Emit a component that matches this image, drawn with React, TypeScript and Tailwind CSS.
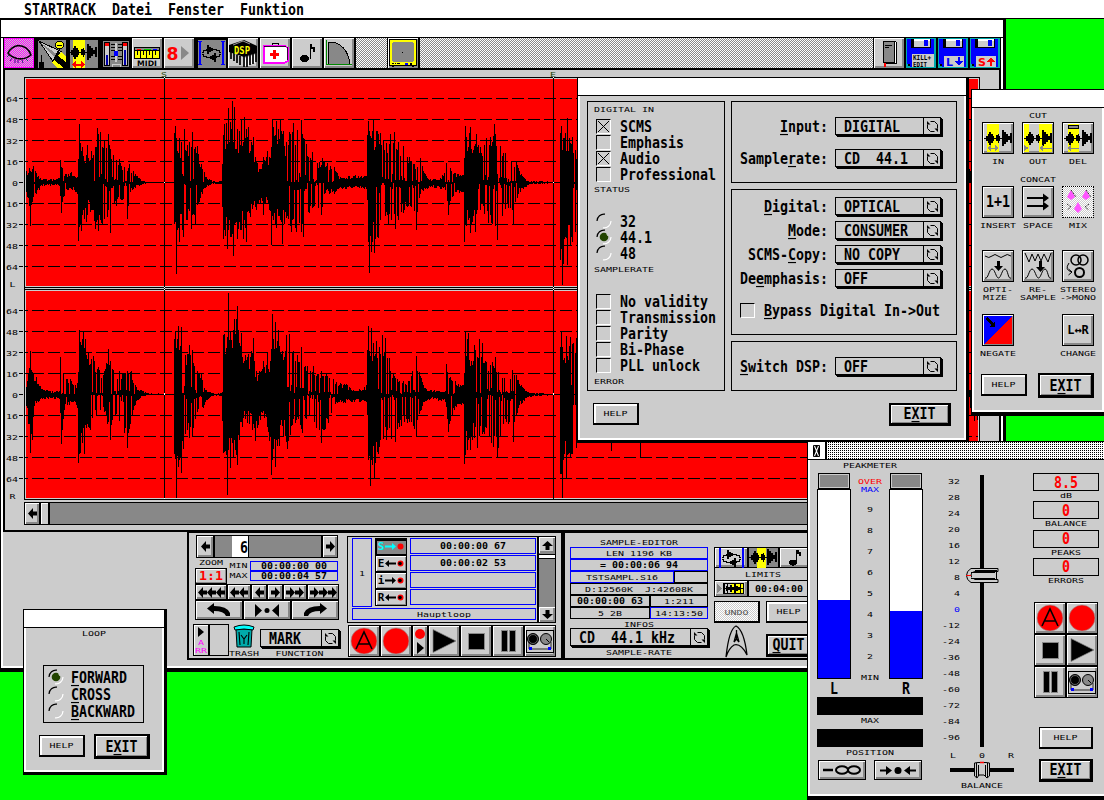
import React from "react";

type Kids = { children?: React.ReactNode; className?: string };

/* ---------- text ---------- */
const Big = ({ children, className = "", flat }: Kids & { flat?: boolean }) => (
  <span
    className={`inline-block shrink-0 origin-center translate-y-px whitespace-pre font-['DejaVu_Sans_Mono',monospace] text-[13.29px] leading-[16px] font-bold ${flat ? "scale-y-[0.9]" : "scale-y-[1.16]"} ${className}`}
  >
    {children}
  </span>
);
const Small = ({ children, className = "", bold }: Kids & { bold?: boolean }) => (
  <span
    className={`inline-block shrink-0 origin-center translate-y-[0.6px] whitespace-pre font-['DejaVu_Sans_Mono',monospace] text-[9.966px] leading-[8px] ${bold ? "scale-y-[0.88] font-bold" : "scale-y-[0.74]"} ${className}`}
  >
    {children}
  </span>
);
const Led = ({ children }: Kids) => <Small bold>{children}</Small>;
const U = ({ children }: Kids) => (
  <span className="underline decoration-1 underline-offset-2">{children}</span>
);

/* ---------- controls ---------- */
const Bevel = ({ children, className = "" }: Kids) => (
  <div
    className={`flex shrink-0 items-center justify-center border border-black bg-[#cccccc] shadow-[inset_1px_1px_0_#fff,inset_-2px_-2px_0_#888] ${className}`}
  >
    {children}
  </div>
);
const Help = ({ className = "w-[46px]" }: Kids) => (
  <div
    className={`flex h-[22px] shrink-0 items-center justify-center border-t border-r-2 border-b-2 border-l border-black shadow-[inset_1px_1px_0_1px_#fff] ${className}`}
  >
    <Small className="-mt-px">HELP</Small>
  </div>
);
const Exit = ({ children, className = "h-[25px] w-[56px]" }: Kids) => (
  <div
    className={`flex shrink-0 items-center justify-center border-t-2 border-r-[3px] border-b-[3px] border-l-2 border-black shadow-[inset_1px_1px_0_#fff,inset_-1px_-1px_0_#888] ${className}`}
  >
    <Big>
      {children ?? (
        <>
          E<U>X</U>IT
        </>
      )}
    </Big>
  </div>
);
const Cycle = () => (
  <svg className="h-[13px] w-[13px]" viewBox="0 0 13 13" fill="none" stroke="#000">
    <path d="M4.500 1.500H8.500L11.500 4.500V8.500M8.500 11.500H4.500L1.500 8.500V4.500" />
    <path d="M1 1V4.500H4.500ZM12 12V8.500H8.500Z" fill="#000" stroke="none" />
  </svg>
);
const Popup = ({ children, className = "w-[106px]" }: Kids) => (
  <div
    className={`flex h-[18px] shrink-0 items-center border border-black shadow-[1px_1px_0_#000,2px_2px_0_#000] ${className}`}
  >
    <span className="-mt-px flex flex-1 pl-2">
      <Big>{children}</Big>
    </span>
    <span className="flex h-full w-[17px] items-center justify-center border-l border-black">
      <Cycle />
    </span>
  </div>
);
const Check = ({ on }: { on?: boolean }) => (
  <span className="h-[15px] w-[15px] shrink-0 border-t border-r border-b border-l border-t-black border-r-white border-b-white border-l-black">
    {on && (
      <svg className="h-[13px] w-[13px]" viewBox="0 0 13 13" stroke="#000" strokeWidth="1">
        <path d="M1 1L12 12M12 1L1 12" />
      </svg>
    )}
  </span>
);
const Radio = ({ on }: { on?: boolean }) => (
  <svg className="h-[16px] w-[16px] shrink-0" viewBox="0 0 16 16" fill="none">
    <path d="M1 8A7 7 0 0 1 9 1.2" stroke="#000" strokeWidth="1.2" />
    <path d="M15 8A7 7 0 0 1 7 14.8" stroke="#fff" strokeWidth="1.2" />
    {on && <circle cx="8" cy="8" r="4.3" fill="#224400" />}
    {on && <path d="M10 5h1.500v2" stroke="#cfd8c8" strokeWidth=".8" />}
  </svg>
);

/* ---------- waveform ---------- */
type Pts = [number, number][];
const LU: Pts = [[26,12],[29,15],[33,17],[36,10],[40,5],[50,4],[59,5],[60,23],[62,15],[66,9],[71,11],[77,6],[79,59],[82,36],[87,38],[91,32],[93,28],[97,55],[100,51],[104,42],[108,49],[113,28],[119,24],[124,16],[129,19],[135,9],[140,4],[147,1],[173,1],[174,50],[175,57],[179,45],[184,54],[187,38],[192,51],[197,37],[201,19],[206,6],[213,2],[221,2],[223,48],[224,59],[228,75],[232,82],[234,76],[237,54],[241,63],[244,66],[248,56],[253,46],[257,20],[263,26],[267,32],[271,36],[272,63],[276,62],[280,63],[283,52],[289,51],[293,60],[297,53],[301,63],[306,39],[312,31],[317,20],[322,25],[327,20],[334,16],[340,6],[355,8],[366,7],[367,48],[368,62],[373,64],[377,52],[380,50],[386,40],[390,49],[394,51],[398,41],[403,37],[409,26],[414,19],[420,25],[425,9],[430,4],[440,5],[446,20],[450,15],[455,10],[463,8],[465,57],[470,56],[476,49],[480,36],[486,45],[490,46],[494,59],[500,37],[505,30],[511,22],[516,22],[521,9],[528,2],[540,2],[559,1],[560,50],[561,57],[565,50],[567,65],[572,46],[575,33],[580,30],[960,10],[969,14],[971,13],[972,0],[979,0]];
const LD: Pts = [[26,10],[30,44],[32,20],[36,12],[42,4],[59,4],[61,31],[64,14],[72,8],[77,12],[78,59],[81,49],[86,40],[90,30],[95,47],[98,49],[102,42],[107,35],[110,51],[116,24],[122,18],[127,37],[130,10],[140,3],[147,1],[173,1],[174,42],[176,92],[179,60],[183,55],[187,38],[191,47],[195,42],[199,20],[206,5],[213,2],[221,2],[223,57],[227,67],[233,74],[237,57],[243,57],[246,60],[250,35],[256,28],[263,33],[269,28],[271,63],[276,46],[282,62],[286,36],[291,50],[296,50],[303,55],[309,31],[321,33],[324,12],[334,12],[345,7],[366,7],[368,60],[369,91],[374,71],[378,56],[388,42],[395,47],[403,31],[411,25],[416,48],[420,12],[430,5],[445,8],[448,33],[452,15],[463,10],[464,60],[470,51],[475,50],[480,28],[488,41],[497,58],[502,34],[508,26],[513,42],[518,12],[528,3],[540,2],[559,1],[560,78],[562,103],[567,83],[572,60],[575,50],[580,30],[960,14],[971,18],[972,0],[979,0]];
const RU: Pts = [[26,8],[30,44],[33,22],[36,18],[40,9],[50,4],[59,4],[60,38],[63,22],[70,16],[77,12],[79,65],[83,64],[85,56],[88,42],[93,39],[98,28],[104,24],[108,46],[113,25],[119,24],[127,24],[131,24],[136,8],[146,2],[173,1],[174,56],[175,64],[178,69],[181,68],[185,40],[189,50],[192,45],[197,24],[201,22],[206,5],[213,2],[221,2],[223,60],[224,61],[228,102],[230,63],[234,76],[237,89],[241,62],[245,40],[253,57],[256,24],[263,34],[267,42],[271,46],[272,81],[275,73],[278,65],[282,44],[286,60],[289,61],[297,40],[301,48],[307,29],[313,29],[321,24],[326,22],[333,16],[340,12],[346,11],[356,4],[366,10],[367,45],[368,69],[371,67],[376,54],[382,60],[385,57],[389,37],[393,22],[408,14],[416,39],[421,17],[426,6],[445,4],[446,31],[450,18],[455,14],[463,10],[465,64],[468,62],[474,50],[479,56],[482,52],[486,33],[495,38],[502,17],[512,25],[516,20],[521,10],[528,3],[540,2],[559,1],[560,48],[561,63],[566,59],[570,58],[576,57],[580,30],[960,9],[971,9],[972,0],[979,0]];
const RD: Pts = [[26,12],[30,59],[32,46],[34,12],[42,5],[59,5],[61,50],[64,16],[72,8],[77,14],[78,69],[84,60],[90,36],[96,22],[104,18],[110,46],[116,20],[127,54],[133,16],[140,4],[147,1],[173,1],[174,60],[176,104],[181,79],[185,40],[189,44],[192,43],[197,18],[203,14],[213,2],[221,2],[223,59],[227,101],[230,74],[237,71],[242,33],[247,29],[255,47],[260,26],[267,33],[271,81],[275,73],[283,43],[287,55],[295,29],[302,39],[309,22],[321,49],[328,29],[337,9],[366,8],[368,66],[370,92],[374,84],[378,60],[386,46],[395,48],[404,28],[416,42],[422,12],[430,5],[445,8],[448,38],[454,16],[463,10],[464,70],[470,56],[477,54],[484,40],[497,64],[503,30],[513,48],[518,14],[528,3],[540,2],[559,1],[560,80],[562,104],[566,84],[572,60],[576,54],[580,34],[605,40],[611,57],[613,30],[634,30],[640,63],[643,34],[960,14],[971,18],[974,27],[975,3],[977,26],[979,8]];
const solid: [number, number][] = [[26,34],[78,91],[174,182],[223,286],[366,376],[464,476],[560,570]];

function columns(pts: Pts, base: number, dir: number, seed: number) {
  let s = seed;
  const rnd = () => ((s = (s * 1103515245 + 12345) & 0x7fffffff) / 0x7fffffff);
  let d = "";
  let i = 0;
  for (let x = 26; x < 978; x++) {
    while (i < pts.length - 2 && pts[i + 1][0] <= x) i++;
    const [ax, ah] = pts[i];
    const [bx, bh] = pts[i + 1];
    const env = ah + ((bh - ah) * (x - ax)) / (bx - ax);
    const r = rnd();
    const isSolid = solid.some(([a, b]) => x >= a && x < b);
    let h: number;
    if (x === ax) h = env;
    else if (env < 13) h = env * (0.55 + 0.45 * r);
    else if (isSolid) h = env * (0.5 + 0.4 * r);
    else h = r < 0.42 ? env * 0.12 * r * 4 : env * (0.45 + 0.5 * r);
    h = Math.max(1, Math.round(h));
    d += dir > 0 ? `M${x} ${base - h}h1v${h}h-1z` : `M${x} ${base}h1v${h}h-1z`;
  }
  return d;
}
const grid = (base: number) =>
  [-84, -63, -42, -21, 21, 42, 63, 84].map((o) => `M16 ${base + o + 0.5}H978`).join("");

const Waveform = () => (
  <svg className="h-[423px] w-[956px] shrink-0" viewBox="24 77 956 423" shapeRendering="crispEdges">
    <rect x="24" y="77" width="956" height="423" fill="#000" />
    <rect x="25" y="78" width="954" height="209" fill="#ccc" />
    <rect x="25" y="288" width="954" height="1" fill="#ccc" />
    <rect x="25" y="290" width="954" height="209" fill="#ccc" />
    <rect x="26" y="79" width="952" height="207" fill="#f00" />
    <rect x="26" y="291" width="952" height="207" fill="#f00" />
    <path d={grid(182)} stroke="#000" strokeDasharray="12 4" />
    <path d={grid(394)} stroke="#000" strokeDasharray="12 4" />
    <path d={columns(LU, 183, 1, 7)} />
    <path d={columns(LD, 182, -1, 31)} />
    <path d={columns(RU, 395, 1, 77)} />
    <path d={columns(RD, 394, -1, 99)} />
    <path d="M164.5 77V499M553.5 77V499" stroke="#000" />
    <path d="M164 182h1v1h-1zM164 393h1v2h-1zM553 182h1v1h-1zM553 393h1v2h-1zM164 287h1v1h-1zM164 289h1v1h-1zM553 287h1v1h-1zM553 289h1v1h-1zM164 498h1v1h-1zM164 77h1v1h-1zM553 77h1v1h-1z" fill="#fff" />
  </svg>
);

/* ---------- icons ---------- */
const Ico = ({ children, className = "h-[30px] w-[30px]", vb = "0 0 30 30" }: Kids & { vb?: string }) => (
  <svg className={`shrink-0 ${className}`} viewBox={vb} shapeRendering="crispEdges">
    {children}
  </svg>
);
const WAVE =
  "M0 13H2V11H4V9H5V7H7V9H9V11H10V13H12V10H14V9H15V11H16V13H18V5H20V7H22V9H24V11H26V8H28V18H26V15H24V17H22V19H20V21H18V14H16V16H15V18H14V16H12V14H10V16H9V18H7V20H5V18H4V16H2V14H0Z";
const Face = ({ children, className = "bg-[#cccccc] shadow-[inset_1px_1px_0_#fff,inset_-2px_-2px_0_#888]" }: Kids) => (
  <div className="w-8 shrink-0 bg-black">
    <div className={`h-[30px] w-[30px] ${className}`}>{children}</div>
  </div>
);
const LoopGlyph = () => (
  <g>
    <path d="M4 3V26M27 3V26" stroke="#00f" strokeWidth="2" />
    <path d="M2 3.5H6M2 26.5H6M25 3.5H29M25 26.5H29" stroke="#00f" />
    <path d="M6 14.500H7V12.500H10V11.500H20V12.500H23V14.500H25M6 16.500H7V18.500H10V19.500H20V18.500H23V16.500H25" stroke="#000" fill="none" />
    <path d="M11 7H13V9H15V10H17V13H15V14H13V16H11ZM20 15H18V17H16V18H14V21H16V22H18V24H20Z" />
  </g>
);
const Disk = ({ children }: Kids) => (
  <Face className="bg-[#00aaaa]">
    <Ico>
      <rect width="30" height="30" fill="#0aa" />
      <path d="M1 1H28V29H4L1 26Z" fill="#00f" />
      <rect x="5" y="1" width="20" height="9" fill="#000" />
      <rect x="8" y="1" width="16" height="8" fill="#ccc" />
      <rect x="8" y="1" width="16" height="2" fill="#fff" />
      <rect x="18" y="2" width="4" height="6" fill="#00f" />
      <rect x="2" y="26" width="2" height="2" />
      {children}
    </Ico>
  </Face>
);

const Toolbar = () => (
  <div className="-mr-px flex h-[32px] border-b-2 border-l border-black bg-black">
    <Face className="bg-[repeating-conic-gradient(#ff00ff_0_25%,#cccccc_0_50%)] bg-[length:2px_2px] shadow-[inset_0_0_0_1px_#f0f]">
      <svg className="h-[30px] w-[30px]" viewBox="0 0 30 30">
        <path d="M4 15Q7 9 14 7.500Q24 8 27 17Q21 22 13 20.500Q7 19 4 15Z" fill="none" stroke="#000" strokeWidth="1.6" />
        <path d="M5 17L3 19M8 20L6 23M11 21V25M14 22V25M18 22L19 25M22 21L24 23" stroke="#408" />
      </svg>
    </Face>
    <Face className="bg-[#888888]">
      <Ico>
        <rect width="30" height="30" fill="#888" />
        <path d="M0 0H30V2H2V30H0Z" />
        <path d="M3 3L26 14L18 25Z" fill="#ccc" stroke="#000" />
        <path d="M5 5L22 17L20 21Z" fill="#888" />
        <path d="M22 12L30 22V30H22L16 24Z" />
        <path d="M25 14L30 19V24L22 18ZM18 22L28 30H22L16 25Z" fill="#ff0" />
        <circle cx="23.500" cy="7" r="4" fill="#ff0" stroke="#000" />
        <path d="M21 7H26M5 17V24M3 24H7V29H3Z" stroke="#000" />
      </Ico>
    </Face>
    <Face className="bg-[#888888]">
      <Ico>
        <rect width="30" height="30" fill="#888" />
        <path d="M0 0H30V2H2V30H0Z" />
        <rect x="5" y="2" width="12" height="28" fill="#ff0" />
        <path d={WAVE} transform="translate(1 1)" />
        <path d="M4 26.500L8 23V25.500H13V23L17 26.500L13 30V27.500H8V30Z" fill="#f00" />
      </Ico>
    </Face>
    <Face className="bg-[#888888]">
      <Ico>
        <path d="M0 0H30V30H0Z" />
        <rect x="3" y="3" width="26" height="26" fill="#888" />
        <rect x="4.500" y="4.500" width="5" height="23" fill="#ccc" stroke="#000" />
        <rect x="22.500" y="4.500" width="5" height="23" fill="#ccc" stroke="#000" />
        <path d="M5 5H9V8H5ZM23 5H27V8H23Z" fill="#f00" />
        <path d="M6 17H8V27H6ZM24 12H26V27H24Z" fill="#00a" />
        <path d="M16 5V24" stroke="#ccc" strokeWidth="2" />
        <path d="M11 6.500H22M11 9.500H22M11 12.500H22M11 18.500H22M11 21.500H22" stroke="#000" strokeDasharray="4 3" />
        <rect x="14" y="13" width="4" height="5" fill="#00f" />
        <path d="M12 29V26H20V29" stroke="#ccc" fill="none" />
      </Ico>
    </Face>
    <Face>
      <svg className="h-[30px] w-[30px]" viewBox="0 0 30 30">
        <g shapeRendering="crispEdges">
          <rect x="2" y="9" width="26" height="12" />
          <rect x="3" y="10" width="24" height="2" fill="#888" />
          <path d="M5 11h4" stroke="#f00" />
          <path d="M12 11h7" stroke="#0c0" />
          <path d="M21 11h4" stroke="#00f" />
          <rect x="3" y="13" width="24" height="7" fill="#ff0" />
          <path d="M5.500 13V17M8.500 13V20M11.500 13V17M14.500 13V20M17.500 13V17M20.500 13V20M23.500 13V17" stroke="#000" />
        </g>
        <text x="5" y="28" fontFamily="DejaVu Sans" fontWeight="bold" fontSize="7.500" textLength="20" lengthAdjust="spacingAndGlyphs">MIDI</text>
      </svg>
    </Face>
    <Face>
      <svg className="h-[30px] w-[30px]" viewBox="0 0 30 30">
        <text x="2.500" y="21.500" fontFamily="DejaVu Sans" fontWeight="bold" fontSize="18" fill="#f00" textLength="12" lengthAdjust="spacingAndGlyphs">8</text>
        <path d="M17 8L25 15L17 22Z" fill="#888" />
      </svg>
    </Face>
    <Face className="bg-[#888888]">
      <Ico>
        <path d="M0 0H30V30H0Z" />
        <rect x="2" y="2" width="28" height="28" fill="#888" />
        <LoopGlyph />
      </Ico>
    </Face>
    <Face>
      <svg className="h-[30px] w-[30px]" viewBox="0 0 30 30">
        <path d="M1 7L16 2L29 8V15L16 19L1 14Z" />
        <path d="M3 14V21M6 15V23M9 17V25M12 18V27M16 18V29M19 17V29M22 16V27M25 15V26M28 13V24" stroke="#000" strokeWidth="1.700" />
        <path d="M5 7L15 3L22 6" stroke="#fff" strokeWidth=".6" fill="none" />
        <path d="M17.500 20V28M20.500 19V28M23.500 18V26M26.500 17V25" stroke="#fff" />
        <text x="6" y="15.500" fontFamily="DejaVu Sans Mono" fontWeight="bold" fontSize="10" fill="#ff0" textLength="16" lengthAdjust="spacingAndGlyphs">DSP</text>
      </svg>
    </Face>
    <Face>
      <Ico>
        <path d="M12 8V5H18V8" fill="none" stroke="#000" />
        <path d="M4 8H25L28 10V23L24 25H4Z" fill="#fff" stroke="#f0f" strokeWidth="1.500" />
        <path d="M4 8.500H26M27.500 9V22" stroke="#000" strokeWidth=".8" />
        <path d="M13 12H16V15H19V18H16V21H13V18H10V15H13Z" fill="#f00" />
      </Ico>
    </Face>
    <Face>
      <Ico>
        <ellipse cx="12.500" cy="20.500" rx="4.500" ry="3.500" />
        <path d="M18.500 6V21" stroke="#000" />
        <path d="M18 6H20V9H23V14H21V11H18Z" />
      </Ico>
    </Face>
    <Face>
      <Ico>
        <path d="M4 4H10Q24 9 26 26H4Z" fill="#888" stroke="#000" />
        <path d="M2.500 2V26.500H28" stroke="#080" fill="none" />
      </Ico>
    </Face>
    <div className="w-[31px] shrink-0 bg-[repeating-conic-gradient(#888_0_25%,#fff_0_50%)] bg-[length:2px_2px]" />
    <div className="w-px shrink-0" />
    <Face>
      <Ico>
        <rect x="1" y="1" width="28" height="27" fill="#000" />
        <rect x="2" y="2" width="26" height="25" fill="#ff0" />
        <rect x="4" y="4" width="22" height="20" fill="#888" />
        <path d="M4 4h1v1h-1zM25 4h1v1h-1zM4 23h1v1h-1zM25 23h1v1h-1z" fill="#ff0" />
        <path d="M14 14h1v1h-1zM4 25h2v1h-2zM7 25h1v1h-1zM9 25h3v1h-3zM22 25h2v2h-2zM4 28h2v1h-2zM24 28h2v1h-2z" />
        <rect x="17" y="25" width="3" height="2" fill="#00f" />
      </Ico>
    </Face>
    <div className="flex-1 bg-[repeating-conic-gradient(#888_0_25%,#fff_0_50%)] bg-[length:2px_2px]" />
    <div className="w-px shrink-0" />
    <Face>
      <Ico>
        <path d="M10 3H21L22 4V25H11L9 23V4Z" fill="#fff" stroke="#000" />
        <path d="M9 3H20V24H9Z" fill="#888" stroke="#000" />
        <path d="M11 7.500H18M11 9.500H15" stroke="#000" />
        <path d="M10 25H12V29H10Z" fill="#f00" />
      </Ico>
    </Face>
    <Disk>
      <rect x="6" y="16" width="22" height="13" fill="#ccc" />
      <text x="7" y="22" fontFamily="DejaVu Sans Mono" fontWeight="bold" fontSize="7" textLength="18" lengthAdjust="spacingAndGlyphs">KILL+</text>
      <text x="7" y="28.500" fontFamily="DejaVu Sans Mono" fontWeight="bold" fontSize="7" textLength="14" lengthAdjust="spacingAndGlyphs">EDIT</text>
    </Disk>
    <Disk>
      <rect x="6" y="18" width="20" height="11" fill="#ccc" />
      <text x="8" y="28" fontFamily="DejaVu Sans" fontWeight="bold" fontSize="11" fill="#00f">L</text>
      <path d="M20 19H22V23H25L21 28L17 23H20Z" fill="#00f" />
    </Disk>
    <div className="w-[30px] shrink-0 overflow-hidden">
      <Disk>
        <rect x="6" y="18" width="20" height="11" fill="#ccc" />
        <text x="8" y="28" fontFamily="DejaVu Sans" fontWeight="bold" fontSize="11" fill="#f00">S</text>
        <path d="M20 28H22V24H25L21 19L17 24H20Z" fill="#f00" />
      </Disk>
    </div>
  </div>
);

const Arrow = ({ n = 1, left }: { n?: number; left?: boolean }) => (
  <span className={`flex ${left ? "" : "-scale-x-100"}`}>
    {Array.from({ length: n }, (_, i) => (
      <svg key={i} className="h-[11px] w-[9px]" viewBox="0 0 9 11">
        <path d="M0 5.500L5 0V3.500H9V7.500H5V11Z" />
      </svg>
    ))}
  </span>
);
const Cell = ({ children, className = "" }: Kids) => (
  <div
    className={`flex h-8 shrink-0 items-center justify-center border border-black bg-[#cccccc] shadow-[inset_1px_1px_0_#fff,inset_-2px_-2px_0_#888] ${className}`}
  >
    {children}
  </div>
);
const AutoIcon = () => (
  <svg className="h-[28px] w-[28px]" viewBox="0 0 28 28">
    <circle cx="14" cy="14" r="13" fill="#f00" stroke="#999" strokeWidth=".6" />
    <path d="M6 22L14 5L22 22M8.500 17H19.500" stroke="#000" strokeWidth="1.600" fill="none" />
  </svg>
);
const RecIcon = () => (
  <svg className="h-[28px] w-[28px]" viewBox="0 0 28 28">
    <circle cx="14" cy="14" r="13" fill="#f00" stroke="#999" strokeWidth=".6" />
  </svg>
);
const PlayIcon = () => (
  <svg className="h-[28px] w-[28px]" viewBox="0 0 28 28">
    <path d="M3 2.500L26 14L3 25.500Z" stroke="#888" strokeWidth=".7" />
  </svg>
);
const StopIcon = () => <span className="h-[17px] w-[17px] border border-[#888888] bg-black" />;
const PauseIcon = () => (
  <span className="flex gap-[1px]">
    <span className="h-[22px] w-[7px] border border-[#888888] bg-black" />
    <span className="h-[22px] w-[7px] border border-[#888888] bg-black" />
  </span>
);
const TapeIcon = () => (
  <svg className="h-[24px] w-[28px]" viewBox="0 0 28 24">
    <rect x=".5" y="1.500" width="27" height="22" fill="#ccc" stroke="#000" />
    <path d="M3 13V20H25V13" fill="none" stroke="#000" strokeWidth=".8" />
    <circle cx="7" cy="10" r="5.500" fill="#000" stroke="#000" />
    <circle cx="7" cy="10" r="4.500" fill="none" stroke="#888" strokeWidth=".7" />
    <circle cx="20" cy="10" r="5.500" fill="#888" stroke="#000" />
    <path d="M20 10L23 13" stroke="#000" />
    <rect x="3" y="18" width="3" height="3" fill="#00f" />
    <rect x="22" y="18" width="3" height="3" fill="#00f" />
  </svg>
);

const Blue = ({ children, className = "" }: Kids) => (
  <div className={`flex shrink-0 items-center justify-center border border-[#0000ff] ${className}`}>{children}</div>
);
const Box = ({ children, className = "" }: Kids) => (
  <div className={`flex shrink-0 items-center justify-center border border-black ${className}`}>{children}</div>
);

/* ---------- main window ---------- */
const scale = ["64", "48", "32", "16", "0", "16", "32", "48", "64"];
const ScaleCol = ({ ch }: { ch: string }) => (
  <>
    {scale.map((v, i) => (
      <div key={i} className="flex h-[21px] items-center justify-end">
        <Small>{v}</Small>
        <span className="mr-px ml-px h-px w-1 bg-black" />
      </div>
    ))}
    <div className="flex h-4 items-center justify-center pr-[4px]">
      <Small className="-mt-[2px]">{ch}</Small>
    </div>
  </>
);

const ZoomPanel = () => (
  <div className="flex w-[153px] shrink-0 flex-col pt-[2px] pl-1">
    <div className="ml-[3px] flex h-[23px] w-[142px] border border-black bg-[#888888]">
      <Bevel className="w-4 border-0">
        <Arrow left />
      </Bevel>
      <div className="w-[19px] border-l-2 border-black" />
      <div className="flex w-[17px] items-center justify-end border-r border-black bg-white">
        <Big>6</Big>
      </div>
      <div className="flex-1 border-r-2 border-black" />
      <Bevel className="w-[14px] border-0">
        <Arrow />
      </Bevel>
    </div>
    <div className="mt-[2px] ml-[2px] flex h-[22px]">
      <div className="flex w-8 flex-col items-center">
        <Small className="-mt-[2px] leading-[5px]">ZOOM</Small>
        <Box className="mt-[2px] h-4 w-8 shadow-[inset_-1px_-1px_0_#888,inset_1px_1px_0_#fff]">
          <Big flat className="-mt-[2px] text-[#ff0000]">1:1</Big>
        </Box>
      </div>
      <div className="mt-[1px] flex w-[23px] flex-col items-center">
        <Small className="-mt-px leading-[10px]">MIN</Small>
        <Small className="leading-[10px]">MAX</Small>
      </div>
      <div className="mt-[1px] flex flex-col">
        <Blue className="h-[10px] w-[88px]"><Led>00:00:00 00</Led></Blue>
        <Blue className="h-[10px] w-[88px]"><Led>00:00:04 57</Led></Blue>
      </div>
    </div>
    <div className="mt-[2px] ml-[2px] flex">
      <Bevel className="h-4 w-8"><Arrow left n={3} /></Bevel>
      <Bevel className="h-4 w-6"><Arrow left n={2} /></Bevel>
      <Bevel className="h-4 w-4"><Arrow left /></Bevel>
      <Bevel className="h-4 w-4"><Arrow /></Bevel>
      <Bevel className="h-4 w-6"><Arrow n={2} /></Bevel>
      <Bevel className="h-4 w-8"><Arrow n={3} /></Bevel>
    </div>
    <div className="ml-[2px] flex">
      <Bevel className="h-5 w-12">
        <svg className="h-[14px] w-[24px]" viewBox="0 0 24 14"><path d="M0 5.500L7 0V3Q20 3 23 10V13H19Q17 8 7 8V11Z" /></svg>
      </Bevel>
      <Bevel className="h-5 w-12">
        <svg className="h-[13px] w-[24px]" viewBox="0 0 24 13"><path d="M0 0L7 6.500L0 13ZM24 0L17 6.500L24 13Z" /><circle cx="12" cy="6.500" r="2.500" /></svg>
      </Bevel>
      <Bevel className="h-5 w-12">
        <svg className="h-[14px] w-[24px] -scale-x-100" viewBox="0 0 24 14"><path d="M0 5.500L7 0V3Q20 3 23 10V13H19Q17 8 7 8V11Z" /></svg>
      </Bevel>
    </div>
    <div className="mt-[4px] flex">
      <Box className="h-8 w-9">
        <div className="flex h-full w-4 flex-col items-center border-r-2 border-black pt-[2px] shadow-[inset_1px_1px_0_#fff]">
          <svg className="mb-[1px] h-[10px] w-[6px]" viewBox="0 0 6 10"><path d="M0 0L6 5L0 10Z" /></svg>
          <Small className="text-[#ff00ff]">A</Small>
          <Small className="text-[#ff00ff]">RR</Small>
        </div>
        <div className="flex-1" />
      </Box>
      <div className="flex w-[30px] flex-col items-center">
        <svg className="h-[25px] w-[22px]" viewBox="0 0 22 25">
          <path d="M3 5L4 23H18L19 5Z" fill="#0aa" stroke="#000" />
          <path d="M1 3Q11 -1 21 3L20 6Q11 4 2 6Z" fill="#0ff" stroke="#000" />
          <path d="M6 8L7 21M16 8L15 21M11 15V20M8 11L11 15L14 11" stroke="#000" strokeWidth="1.100" fill="none" />
        </svg>
        <Small>TRASH</Small>
      </div>
      <div className="flex flex-col items-center pt-[5px] pl-px">
        <Popup className="w-[79px]">MARK</Popup>
        <Small className="mt-[2px]">FUNCTION</Small>
      </div>
    </div>
  </div>
);

const LoopButton = ({ t, left, on }: { t: string; left?: boolean; on?: boolean }) => (
  <div
    className={`flex h-[17px] w-8 shrink-0 items-center justify-center gap-px border border-black ${on ? "bg-[#888888] text-[#00ffff] shadow-[inset_1px_2px_0_#000]" : "bg-[#cccccc] shadow-[inset_1px_1px_0_#fff,inset_-1px_-1px_0_#888]"}`}
  >
    <span className="font-['DejaVu_Sans_Mono',monospace] text-[11px] leading-[14px] font-bold">{t}</span>
    <svg className={`h-[7px] w-[11px] ${left ? "-scale-x-100" : ""}`} viewBox="0 0 11 7">
      <path d="M0 2.500H7V0L11 3.500L7 7V4.500H0Z" fill="currentColor" />
    </svg>
    <svg className="h-[7px] w-[7px]" viewBox="0 0 7 7"><circle cx="3.500" cy="3.500" r="3" fill="#f00" />{!on && <circle cx="3" cy="3.500" r="1.800" />}</svg>
  </div>
);

const LoopPanel = () => (
  <div className="flex w-[214px] shrink-0 flex-col pt-[3px] pl-[4px]">
    <div className="flex h-[87px] w-[209px] border border-black">
      <div className="flex w-[190px] flex-col pt-px pl-1">
        <div className="flex h-[69px] gap-[3px]">
          <Blue className="w-[20px]"><Small>1</Small></Blue>
          <div className="flex flex-col">
            <LoopButton t="S" on />
            <LoopButton t="E" left />
            <LoopButton t="i" />
            <LoopButton t="R" left />
          </div>
          <div className="flex flex-col gap-px">
            <Blue className="h-4 w-[126px]"><Led>00:00:00 67</Led></Blue>
            <Blue className="h-4 w-[126px]"><Led>00:00:02 53</Led></Blue>
            <Blue className="h-4 w-[126px]" />
            <Blue className="h-4 w-[126px]" />
          </div>
        </div>
        <Blue className="mt-px h-3 w-[184px]"><Small>Hauptloop</Small></Blue>
      </div>
      <div className="flex flex-1 flex-col border-l-2 border-black bg-[#888888]">
        <Bevel className="h-[16px] w-4 border-0"><span className="rotate-90"><Arrow left /></span></Bevel>
        <div className="mt-px h-[5px] border-y border-black bg-white" />
        <div className="flex-1" />
        <Bevel className="h-[15px] w-4 border-0"><span className="-rotate-90"><Arrow left /></span></Bevel>
      </div>
    </div>
    <div className="mt-[2px] ml-px flex">
      <Cell className="w-8"><AutoIcon /></Cell>
      <Cell className="w-8"><RecIcon /></Cell>
      <Cell className="w-4">
        <svg className="h-[26px] w-[12px]" viewBox="0 0 12 26"><circle cx="6" cy="6" r="5" fill="#f00" /><path d="M3 14L10 20L3 26Z" /></svg>
      </Cell>
      <Cell className="w-8"><PlayIcon /></Cell>
      <Cell className="w-8"><StopIcon /></Cell>
      <Cell className="w-8"><PauseIcon /></Cell>
      <Cell className="w-8"><TapeIcon /></Cell>
    </div>
  </div>
);

const InfoPanel = () => (
  <div className="flex w-[149px] shrink-0 flex-col pt-[4px] pl-[5px]">
    <div className="flex w-[138px] flex-col items-center">
      <Small className="leading-[9px]">SAMPLE-EDITOR</Small>
      <Blue className="mt-[1px] h-3 w-[138px]"><Small className="-mt-px">LEN 1196 KB</Small></Blue>
      <Blue className="h-3 w-[138px]"><Led>= 00:00:06 94</Led></Blue>
      <div className="flex">
        <Blue className="h-3 w-[104px]"><Small className="-mt-px">TSTSAMPL.S16</Small></Blue>
        <Box className="h-3 w-[34px]" />
      </div>
      <Box className="h-3 w-[138px]"><Small className="-mt-px">D:12560K  J:42608K</Small></Box>
      <div className="flex">
        <Box className="h-3 w-[80px]"><Led>00:00:00 63</Led></Box>
        <Box className="h-3 w-[58px]"><Small className="-mt-px">1:211</Small></Box>
      </div>
      <div className="flex">
        <Box className="h-3 w-[80px]"><Small className="-mt-px">5 2B</Small></Box>
        <Blue className="h-3 w-[58px]"><Small className="-mt-px">14:13:50</Small></Blue>
      </div>
      <Small className="leading-[9px]">INFOS</Small>
      <Popup className="w-[138px]">CD  44.1 kHz</Popup>
      <Small className="mt-[2px]">SAMPLE-RATE</Small>
    </div>
  </div>
);

const RightPanel = () => (
  <div className="flex w-[110px] shrink-0 flex-col pt-[14px]">
    <div className="flex h-[50px] flex-col border border-black">
      <div className="flex h-[20px] border-b border-black">
        <Bevel className="w-[32px] border-0">
          <Ico className="h-[20px] w-[31px]" vb="0 5 31 20"><LoopGlyph /></Ico>
        </Bevel>
        <div className="w-[33px] border-x-2 border-black bg-[#888888]">
          <Ico className="h-[20px] w-[29px]" vb="0 4 29 20">
            <rect x="8" y="4" width="9" height="20" fill="#ff0" />
            <path d={WAVE} />
          </Ico>
        </div>
        <Bevel className="w-[30px] border-0">
          <Ico className="h-[16px] w-[20px]" vb="5 5 20 20">
            <ellipse cx="12.500" cy="21" rx="5" ry="3.500" />
            <path d="M17 5V21" stroke="#000" strokeWidth="1.500" />
            <path d="M18 5H20V8H22V13H20V10H18Z" />
          </Ico>
        </Bevel>
      </div>
      <div className="flex h-[13px] items-center border-b border-black pl-[30px]"><Small>LIMITS</Small></div>
      <div className="flex flex-1">
        <Bevel className="w-[32px] border-0">
          <Ico className="h-[11px] w-[28px]" vb="0 0 28 11">
            <path d="M0 1L5 5.500L0 10Z" fill="#888" />
            <rect x="6" y="0" width="21" height="11" />
            <rect x="8" y="1" width="18" height="9" fill="#ccc" />
            <rect x="14" y="1" width="12" height="9" fill="#ff0" />
            <path d="M7 5H9V3H10V1H11V4H13V2H15V4H17V1H19V3H21V4H23V1H24V5H27V6H24V10H23V7H21V8H19V10H17V7H15V9H13V7H11V10H10V8H9V6H7Z" />
          </Ico>
        </Bevel>
        <div className="flex items-center border-l-2 border-black pl-[6px]"><Led>00:04:00</Led></div>
      </div>
    </div>
    <div className="mt-1 flex gap-[6px]">
      <div className="flex h-[22px] w-[46px] shrink-0 items-center justify-center border-t border-r-2 border-b-2 border-l border-black bg-[repeating-conic-gradient(#ccc_0_25%,#fff_0_50%)] bg-[length:2px_2px]">
        <Small className="text-[#555555]">UNDO</Small>
      </div>
      <Help className="w-[46px]" />
    </div>
    <div className="mt-[2px] flex items-start">
      <svg className="ml-[11px] h-[33px] w-[24px] shrink-0" viewBox="0 0 24 33" fill="none" stroke="#000" strokeWidth="1.300">
        <path d="M1 32Q4 4 11 1Q19 5 22 30Q16 18 9 20Q4 23 1 32Z" />
        <path d="M11.500 5V15M9 17L11.500 8L14 17L11.500 14Z" />
      </svg>
      <Exit className="mt-[9px] ml-[17px] h-[23px] w-[46px] [&>span]:-mt-[2px]"><U>Q</U>UIT</Exit>
    </div>
  </div>
);

const MainWindow = () => (
  <div className="absolute top-[19px] left-0 h-[653px] w-[1006px] bg-black">
    <div className="flex h-[650px] w-[1004px] flex-col border border-black bg-white">
      <div className="h-[18px] shrink-0 border-b border-black" />
      <div className="mr-[2px] mb-[2px] ml-[2px] flex flex-1 flex-col bg-[#cccccc]">
        <div className="flex flex-col border-r-2 border-black">
          <Toolbar />
          <div className="flex h-[462px] flex-col border-b-2 border-l-2 border-black">
            <div className="flex h-[7px] shrink-0 items-center pl-[156px] text-[#224400]">
              <Small>S</Small>
              <Small className="ml-[383px]">E</Small>
            </div>
            <div className="flex h-[423px] shrink-0">
              <div className="w-[19px] shrink-0 pt-[11px]">
                <ScaleCol ch="L" />
                <div className="h-[7px]" />
                <ScaleCol ch="R" />
              </div>
              <Waveform />
            </div>
            <div className="mt-[2px] ml-[19px] flex h-[23px] w-[956px] shrink-0 border border-black bg-[#888888]">
              <Bevel className="w-[14px] border-0"><Arrow left /></Bevel>
              <div className="w-[2px] bg-black" />
              <div className="w-[9px] border-r-2 border-black bg-[#cccccc] shadow-[inset_1px_1px_0_#fff]" />
            </div>
          </div>
        </div>
        <div className="-mt-px ml-[184px] flex h-[129px] border-2 border-black">
          <ZoomPanel />
          <div className="w-px" />
          <LoopPanel />
          <div className="ml-[4px] w-[4px] shrink-0 bg-black" />
          <InfoPanel />
          <RightPanel />
        </div>
      </div>
    </div>
  </div>
);

/* ---------- dialogs ---------- */
const DialogTitle = () => <div className="h-[18px] shrink-0 border-b border-black bg-white" />;

const Row = ({ label, value, className = "h-6" }: { label: React.ReactNode; value: string; className?: string }) => (
  <div className={`flex items-center justify-between pr-[15px] pl-2 ${className}`}>
    <span className="flex w-[88px] justify-end"><Big>{label}</Big></span>
    <Popup>{value}</Popup>
  </div>
);
const CheckRow = ({ label, on }: { label: string; on?: boolean }) => (
  <div className="flex h-4 items-center gap-[9px] pl-[2px]">
    <Check on={on} />
    <Big>{label}</Big>
  </div>
);
const RadioRow = ({ label, on, className = "h-4 gap-[8px] pl-[2px]" }: { label: React.ReactNode; on?: boolean; className?: string }) => (
  <div className={`flex items-center ${className}`}>
    <Radio on={on} />
    <Big>{label}</Big>
  </div>
);

const DigitalDialog = () => (
  <div className="absolute top-[77px] left-[577px] h-[366px] w-[392px] bg-black">
    <div className="flex h-[363px] w-[389px] flex-col border-t border-l border-black bg-white">
      <DialogTitle />
      <div className="mr-[2px] mb-[2px] ml-[2px] flex flex-1 flex-col bg-[#cccccc] pt-[5px] pr-[7px] pl-[7px]">
        <div className="flex gap-[6px]">
          <div className="flex h-[290px] w-[138px] flex-col border border-black pt-[2px] pl-[6px]">
            <Small className="leading-[9px]">DIGITAL IN</Small>
            <div className="mt-[5px]">
              <CheckRow label="SCMS" on />
              <CheckRow label="Emphasis" />
              <CheckRow label="Audio" on />
              <CheckRow label="Professional" />
            </div>
            <Small className="mt-[3px]">STATUS</Small>
            <div className="mt-[20px]">
              <RadioRow label="32" />
              <RadioRow label="44.1" on />
              <RadioRow label="48" />
            </div>
            <Small className="mt-[4px]">SAMPLERATE</Small>
            <div className="mt-[20px]">
              <CheckRow label="No validity" />
              <CheckRow label="Transmission" />
              <CheckRow label="Parity" />
              <CheckRow label="Bi-Phase" />
              <CheckRow label="PLL unlock" />
            </div>
            <Small className="mt-[4px]">ERROR</Small>
          </div>
          <div className="flex flex-1 flex-col gap-[6px]">
            <div className="h-[82px] border border-black pt-[8px]">
              <Row label={<><U>I</U>nput:</>} value="DIGITAL" className="h-8" />
              <Row label={<>Sample<U>r</U>ate:</>} value="CD  44.1" className="h-8" />
            </div>
            <div className="h-[146px] border border-black pt-[4px]">
              <Row label={<><U>D</U>igital:</>} value="OPTICAL" />
              <Row label={<><U>M</U>ode:</>} value="CONSUMER" />
              <Row label={<>SCMS-<U>C</U>opy:</>} value="NO COPY" />
              <Row label={<>De<U>e</U>mphasis:</>} value="OFF" />
              <div className="mt-[12px] flex items-center gap-[9px] pl-2">
                <Check />
                <Big><U>B</U>ypass Digital In-&gt;Out</Big>
              </div>
            </div>
            <div className="h-[50px] border border-black pt-[12px]">
              <Row label={<><U>S</U>witch DSP:</>} value="OFF" />
            </div>
          </div>
        </div>
        <div className="mt-[12px] flex justify-between pr-[6px] pl-[6px]">
          <Help />
          <Exit className="h-[23px] w-[62px] [&>span]:-mt-[2px]" />
        </div>
      </div>
    </div>
  </div>
);

const ToolBtn = ({ children, label, align = "items-center", className = "" }: Kids & { label: string; align?: string }) => (
  <div className="flex w-10 flex-col items-center">
    <div className={`flex h-8 w-8 items-center justify-center border border-black bg-[#cccccc] shadow-[inset_1px_1px_0_#fff,inset_-2px_-2px_0_#888] ${className}`}>{children}</div>
    <div className={`mt-[3px] mb-px flex flex-col ${align}`}>
      {label.split("\n").map((l) => <Small key={l}>{l}</Small>)}
    </div>
  </div>
);
const S28 = ({ children }: Kids) => (
  <svg className="h-[28px] w-[28px]" viewBox="0 0 28 28" fill="none" stroke="#000">{children}</svg>
);

const ToolsWindow = () => (
  <div className="absolute top-[89px] left-[971px] h-[327px] w-[140px] bg-black">
    <div className="flex h-[323px] w-[133px] flex-col border-t border-l border-black bg-white">
      <DialogTitle />
      <div className="mr-[2px] mb-[2px] ml-[2px] flex flex-1 flex-col bg-[#cccccc] pl-1">
        <div className="flex w-[120px] flex-col items-center">
          <Small className="mt-[3px]">CUT</Small>
          <div className="mt-[3px] flex">
            <ToolBtn label="IN">
              <Ico className="h-[28px] w-[28px]" vb="0 0 28 28">
                <rect x="3" width="12" height="28" fill="#ff0" />
                <path d={WAVE} transform="translate(0 1)" />
                <path d="M3 24L7 21V23.500H11V21L15 24L11 27V24.500H7V27Z" fill="#888" />
              </Ico>
            </ToolBtn>
            <ToolBtn label="OUT">
              <Ico className="h-[28px] w-[28px]" vb="0 0 28 28">
                <path d="M0 0H5V28H0ZM15 0H28V28H15Z" fill="#ff0" />
                <path d={WAVE} transform="translate(0 1)" />
                <path d="M0 21L5 24L0 27ZM15 24L19 21V23.500H28V24.500H19V27Z" fill="#888" />
              </Ico>
            </ToolBtn>
            <ToolBtn label="DEL">
              <Ico className="h-[28px] w-[28px]" vb="0 0 28 28">
                <rect x="4" width="11" height="28" fill="#ff0" />
                <path d={WAVE} transform="translate(0 1)" />
                <rect x="4.500" y="1.500" width="10" height="3" fill="#888" stroke="#000" />
                <path d="M3 24L7 21V23.500H15V24.500H7V27Z" fill="#888" />
              </Ico>
            </ToolBtn>
          </div>
          <Small className="mt-[9px]">CONCAT</Small>
          <div className="mt-[3px] flex">
            <ToolBtn label="INSERT"><span className="scale-y-125 font-['DejaVu_Sans_Mono',monospace] text-[13.29px] font-bold">1+1</span></ToolBtn>
            <ToolBtn label="SPACE"><S28><path d="M3 10H20M3 18H20" strokeWidth="2" /><path d="M19 5.500L25 10L19 14.500ZM19 13.500L25 18L19 22.500Z" fill="#000" stroke="none" /></S28></ToolBtn>
            <ToolBtn label="MIX" className="border-dotted bg-[repeating-conic-gradient(#ccc_0_25%,#fff_0_50%)] bg-[length:2px_2px] shadow-none">
              <S28>
                <path d="M7 2L11 9L7 12L3 9ZM22 2L26 9L22 12L18 9ZM14 14L18 21L14 25L10 21Z" fill="#f5f" stroke="none" />
                <path d="M7 2L12 9M22 2L27 9M3 16L7 19L3 22M25 16L21 19L25 22" strokeDasharray="1 1" />
              </S28>
            </ToolBtn>
          </div>
          <div className="mt-[20px] flex items-start">
            <ToolBtn align="items-start" label={"OPTI-\nMIZE"}><S28><path d="M1 4Q5 7 8 4T14 4T20 4T27 4M1 26C4 28 5 17 8 17S12 26 14.500 26S18 17 21 17S24 28 27 26" /><path d="M13 9H16V14H19L14.500 19L10 14H13Z" fill="#000" stroke="none" /></S28></ToolBtn>
            <ToolBtn label={"RE-\nSAMPLE"}><S28><path d="M1 1L5 10L8 2L11 9L14 2L17 9L20 2L24 10L27 1M1 26C4 28 5 17 8 17S12 26 14.500 26S18 17 21 17S24 28 27 26" /><path d="M15 9H18V15H21L16.500 20L12 15H15Z" fill="#000" stroke="none" /></S28></ToolBtn>
            <ToolBtn label={"STEREO\n->MONO"}><S28><circle cx="12" cy="8" r="5" strokeWidth="1.500" /><circle cx="19" cy="8" r="5" strokeWidth="1.500" /><circle cx="15.500" cy="20.500" r="4.500" strokeWidth="2" /><path d="M5 11Q0 18 8 20M4.500 17L8 20L4.500 23" /></S28></ToolBtn>
          </div>
          <div className="mt-[12px] flex w-full justify-between">
            <ToolBtn label="NEGATE">
              <Ico className="h-[28px] w-[28px]" vb="0 0 28 28">
                <path d="M0 0H28L0 28Z" fill="#00f" />
                <path d="M28 0V28H0Z" fill="#f00" />
                <path d="M1 3L3 1L9 7L11 5V11H5L7 9Z" />
              </Ico>
            </ToolBtn>
            <ToolBtn label="CHANGE"><span className="font-['DejaVu_Sans_Mono',monospace] text-[12px] font-bold">L↔R</span></ToolBtn>
          </div>
        </div>
        <div className="mt-[15px] ml-[3px] flex gap-[11px]">
          <Help className="mt-px w-[46px]" />
          <Exit />
        </div>
      </div>
    </div>
  </div>
);

const LoopWindow = () => (
  <div className="absolute top-[609px] left-[23px] h-[166px] w-[144px] bg-black">
    <div className="flex h-[163px] w-[141px] flex-col border-t border-l border-black bg-white">
      <DialogTitle />
      <div className="mr-[2px] mb-[2px] ml-[2px] flex flex-1 flex-col bg-[#cccccc]">
        <Small className="mt-px self-center">LOOP</Small>
        <div className="mt-[28px] ml-[17px] h-[58px] w-[101px] border border-black pt-[2px]">
          <RadioRow on label={<><U>F</U>ORWARD</>} className="h-[17px] gap-[7px] pl-1" />
          <RadioRow label={<><U>C</U>ROSS</>} className="h-[17px] gap-[7px] pl-1" />
          <RadioRow label={<><U>B</U>ACKWARD</>} className="h-[17px] gap-[7px] pl-1" />
        </div>
        <div className="mt-[11px] ml-[13px] flex gap-[9px]">
          <Help className="mt-px w-[46px]" />
          <Exit />
        </div>
      </div>
    </div>
  </div>
);

const Meter = ({ level, ch }: { level: string; ch: string }) => (
  <div className="flex w-[34px] flex-col items-center">
    <div className="h-4 w-8 border border-black bg-[#888888] shadow-[inset_1px_1px_0_#ccc,inset_-1px_-1px_0_#ccc]" />
    <div className="flex h-[190px] w-[34px] flex-col justify-end border border-black bg-white">
      <div className={`bg-[#0000ff] ${level}`} />
    </div>
    <Big className="mt-px mb-px">{ch}</Big>
  </div>
);
const Readout = ({ v, label }: { v: string; label: string }) => (
  <div className="flex h-[28.3px] flex-col items-center">
    <Box className="h-[18px] w-[66px]"><Big className="-mt-px text-[#ff0000]">{v}</Big></Box>
    <Small>{label}</Small>
  </div>
);
const db = ["32", "28", "24", "20", "16", "12", "8", "4", "0", "-12", "-24", "-36", "-48", "-60", "-72", "-84", "-96"];
const marks = ["9", "8", "7", "6", "5", "4", "3", "2", "MIN"];

const PeakWindow = () => (
  <div className="absolute top-[441px] left-[807px] flex h-[359px] w-[310px] flex-col border-t border-l border-black bg-white">
    <div className="flex h-[18px] shrink-0 border-b border-black">
      <div className="flex w-[19px] items-center justify-center border-r-2 border-black">
        <svg className="h-[12px] w-[7px]" viewBox="0 0 7 12"><rect width="7" height="12" rx="1" /><path d="M1.500 1L5.500 11M5.500 1L1.500 11" stroke="#fff" strokeWidth="1.100" /></svg>
      </div>
      <div className="flex-1 bg-[conic-gradient(#000_0_25%,#fff_0)] bg-[length:2px_2px]" />
    </div>
    <div className="ml-[2px] flex h-[334px] bg-[#cccccc]">
      <div className="flex w-[120px] flex-col pl-[7px]">
        <Small className="mt-[1px] ml-[26px] w-max">PEAKMETER</Small>
        <div className="mt-[4px] flex w-[106px] justify-between">
          <Meter ch="L" level="h-[78px]" />
          <div className="flex w-[38px] flex-col items-center pt-[4px]">
            <Small className="text-[#ff0000]">OVER</Small>
            <Small className="mb-[5px] text-[#0000ff]">MAX</Small>
            {marks.map((m) => (
              <div key={m} className="flex h-[21px] items-center"><Small>{m}</Small></div>
            ))}
          </div>
          <Meter ch="R" level="h-[67px]" />
        </div>
        <div className="flex w-[106px] flex-col items-center">
          <div className="h-[18px] w-full bg-black" />
          <Small className="mt-px">MAX</Small>
          <div className="mt-[5px] h-[18px] w-full bg-black" />
          <Small className="mt-px">POSITION</Small>
          <div className="mt-[4px] flex gap-2">
            <Bevel className="h-5 w-12"><svg className="h-[10px] w-[40px]" viewBox="0 0 40 10" fill="none" stroke="#000" strokeWidth="2"><path d="M1 5H11" strokeWidth="2.500" /><ellipse cx="20" cy="5" rx="6" ry="3.800" /><ellipse cx="32" cy="5" rx="6" ry="3.800" /></svg></Bevel>
            <Bevel className="h-5 w-12"><svg className="h-[9px] w-[36px]" viewBox="0 0 36 9"><path d="M0 3.500H6V0L12 4.500L6 9V5.500H0ZM36 3.500H30V0L24 4.500L30 9V5.500H36Z" /><circle cx="18" cy="4.500" r="3.500" /></svg></Bevel>
          </div>
        </div>
      </div>
      <div className="flex w-[103px] flex-col pt-[13px]">
        <div className="flex">
          <div className="flex w-[30px] flex-col items-end">
            {db.map((d) => (
              <div key={d} className="flex h-4 items-center"><Small className={d === "0" ? "text-[#0000ff]" : ""}>{d}</Small></div>
            ))}
          </div>
          <svg className="mt-[2px] ml-[5px] h-[272px] w-[34px]" viewBox="965 475 34 272" fill="none" stroke="#000">
            <rect x="980" y="475" width="4" height="272" fill="#000" stroke="none" shapeRendering="crispEdges" />
            <path d="M998 568.500H971Q966.500 571 966.500 575.500Q966.500 580 971 582.500H998V579.500H975Q971 578 971 575Q971 572 975 571.500H998V568.500" fill="#ccc" />
            <path d="M971 572.500H995M971 578.500H995M975 570.500H997M996.500 572V579" />
            <rect x="972" y="573" width="23" height="5" fill="#ccc" stroke="none" />
            <path d="M966 575.500H971" stroke="#f00" />
          </svg>
        </div>
        <div className="mt-[4px] ml-[20px] flex w-[64px] flex-col items-center">
          <div className="flex w-full justify-between"><Small>L</Small><Small>0</Small><Small>R</Small></div>
          <svg className="mt-[2px] h-[18px] w-[64px]" viewBox="950 761 64 18" fill="none" stroke="#000">
            <rect x="950" y="768" width="64" height="4" fill="#000" stroke="none" />
            <path d="M974.500 763L978 762.500H986L989.500 763V776L987 778L984 775H979L977 778L974.500 776Z" fill="#ccc" />
            <path d="M976.500 763V777M987.500 763V777M978.500 765V776M985.500 765V776" />
            <path d="M980 762.500H984" stroke="#f00" strokeWidth="1.500" />
          </svg>
          <Small className="mt-[2px]">BALANCE</Small>
        </div>
      </div>
      <div className="flex flex-1 flex-col bg-[#cccccc] pt-[13px]">
        <div className="w-[66px]">
          <Readout v="8.5" label="dB" />
          <Readout v="0" label="BALANCE" />
          <Readout v="0" label="PEAKS" />
          <Readout v="0" label="ERRORS" />
        </div>
        <div className="mt-[16px] ml-px grid w-16 grid-cols-2">
          <Cell><AutoIcon /></Cell>
          <Cell><RecIcon /></Cell>
          <Cell><StopIcon /></Cell>
          <Cell><PlayIcon /></Cell>
          <Cell><PauseIcon /></Cell>
          <Cell><TapeIcon /></Cell>
        </div>
        <Help className="mt-[29px] ml-[6px] w-[54px]" />
        <Exit className="mt-[10px] ml-[6px] h-[23px] w-[54px] [&>span]:-mt-[2px]" />
      </div>
    </div>
    <div className="mt-auto h-1 shrink-0 bg-black" />
  </div>
);

export default function App() {
  return (
    <div className="relative h-[800px] w-[1104px] overflow-hidden bg-[#00ff00] text-black">
      <div className="flex h-[19px] items-center gap-4 border-b border-black bg-white pl-6">
        <Big>STARTRACK</Big>
        <Big>Datei</Big>
        <Big>Fenster</Big>
        <Big>Funktion</Big>
      </div>
      <MainWindow />
      <DigitalDialog />
      <ToolsWindow />
      <LoopWindow />
      <PeakWindow />
    </div>
  );
}
